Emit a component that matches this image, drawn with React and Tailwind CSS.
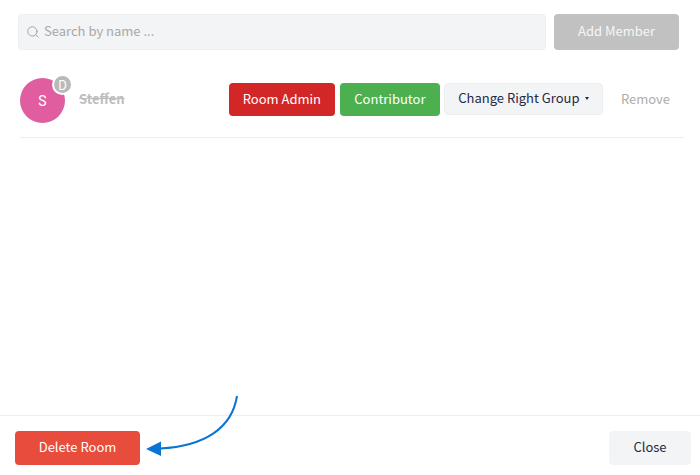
import { Search } from 'lucide-react'

export default function App() {
  return (
    <div className="relative flex h-[475px] w-[700px] flex-col bg-white font-['Noto_Sans_CJK_SC',sans-serif] text-[13px] leading-5 text-[#1f2a44]">
      {/* Search row */}
      <div className="flex gap-2 pl-[18px] pr-[21px] pt-[14px]">
        <div className="flex h-9 flex-1 items-center rounded border border-[#eceef0] bg-[#f3f4f6] pl-[7px] text-[#a8a8a8]">
          <Search size={14} strokeWidth={1.5} className="text-[#9a9a9a]" />
          <span className="ml-1 pb-[2px]">Search by name ...</span>
        </div>
        <button className="h-9 w-[125px] rounded bg-[#c1c1c1] pb-[2px] text-[#f6f6f6]">Add Member</button>
      </div>

      {/* Member row */}
      <div className="ml-5 mr-4 mt-7 flex h-[60px] items-start border-b border-[#eeeef2]">
        <div className="relative flex size-[45px] items-center justify-center rounded-full bg-[#e05da0] font-['Roboto',sans-serif] text-[14px] text-white">
          S
          <span className="absolute -right-[8px] -top-[4px] flex size-[21px] items-center justify-center rounded-full border-2 border-white bg-[#b9b9b9] font-['Noto_Sans_CJK_SC',sans-serif] text-[13px] text-white">D</span>
        </div>
        <span className="ml-[14px] mt-[11px] font-bold text-[#bdbdbd] line-through">Steffen</span>
        <div className="ml-auto mt-[5px] flex items-start">
          <button className="h-[33px] w-[106px] rounded bg-[#d32626] pb-[2px] text-white">Room Admin</button>
          <button className="ml-[5px] h-[33px] w-[100px] rounded bg-[#4caf50] pb-[2px] text-white">Contributor</button>
          <button className="ml-1 flex h-8 w-[159px] items-center justify-center rounded border border-[#eceef0] bg-[#f3f4f6] pb-[2px]">
            Change Right Group
            <span className="ml-[5px] h-0 w-0 border-x-[2.5px] border-t-[3px] border-x-transparent border-t-[#1f2a44]"></span>
          </button>
          <span className="ml-[18px] mr-[14px] mt-[6px] text-[#adadad]">Remove</span>
        </div>
      </div>

      {/* Footer */}
      <div className="mt-auto flex h-[60px] items-start justify-between border-t border-[#eeeef4] pl-[15px] pr-[9px] pt-[15px]">
        <button className="h-[34px] w-[125px] rounded bg-[#e74c3c] pb-[2px] text-white">Delete Room</button>
        <button className="h-[34px] w-[82px] rounded bg-[#f3f4f6] pb-[2px]">Close</button>
      </div>

      {/* Annotation arrow */}
      <svg className="absolute left-0 top-0" width="700" height="475" fill="none">
        <path d="M237 396C232 428 205 446 160 448.5" stroke="#0a75d2" strokeWidth="2" />
        <path d="M146 449L161 441.5V456Z" fill="#0a75d2" />
      </svg>
    </div>
  )
}
